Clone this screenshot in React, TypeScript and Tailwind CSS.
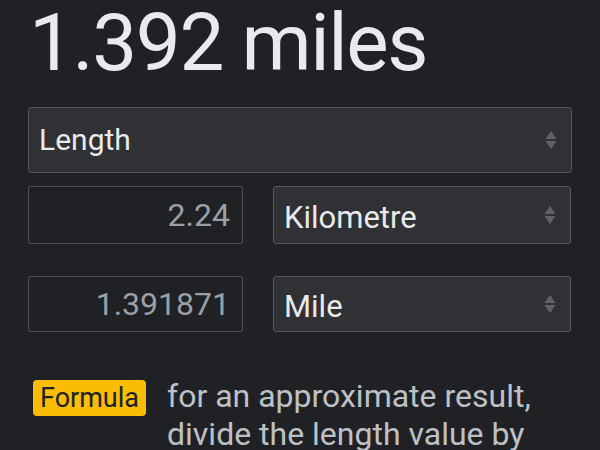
import type { ReactElement } from "react";

function SortArrows(): ReactElement {
  return (
    <svg width="12" height="20" viewBox="0 0 12 20" className="shrink-0" aria-hidden="true">
      <path d="M6 1 L11.5 9 L0.5 9 Z" fill="#5f6368" />
      <path d="M6 19 L11.5 11 L0.5 11 Z" fill="#5f6368" />
    </svg>
  );
}

function SelectBox({ label, size, height }: { label: string; size: string; height: string }): ReactElement {
  return (
    <div
      className={`flex items-center justify-between rounded-[3px] border border-[#55585c] bg-[#303134] pl-[10px] pr-[14px] text-[#e8eaed] ${height}`}
    >
      <span className={`${size} leading-none`}>{label}</span>
      <SortArrows />
    </div>
  );
}

function ValueBox({ value, height }: { value: string; height: string }): ReactElement {
  return (
    <div
      className={`flex items-center justify-end rounded-[2px] border border-[#4d5054] bg-[#202124] pr-[12px] text-[32px] leading-none text-[#9aa0a6] ${height}`}
    >
      {value}
    </div>
  );
}

export default function App(): ReactElement {
  return (
    <div className="min-h-screen w-full overflow-hidden bg-[#202124] px-[28px] font-['Roboto','Noto_Sans',sans-serif]">
      <h1 className="mt-[3px] h-[80px] pl-[1px] text-[80px] font-normal leading-none tracking-[-1.4px] text-[#e8eaed]">
        1.392 miles
      </h1>

      <div className="mt-[24px]">
        <SelectBox label="Length" size="text-[30px]" height="h-[66px]" />
      </div>

      <div className="mt-[13px] grid grid-cols-[215px_298px] gap-x-[30px]">
        <ValueBox value="2.24" height="h-[58px]" />
        <SelectBox label="Kilometre" size="text-[31px] pt-[4px]" height="h-[58px]" />
      </div>

      <div className="mt-[32px] grid grid-cols-[215px_298px] gap-x-[30px]">
        <ValueBox value="1.391871" height="h-[56px]" />
        <SelectBox label="Mile" size="text-[31px] pt-[4px]" height="h-[56px]" />
      </div>

      <div className="mt-[45px] flex items-baseline pl-[5px]">
        <span className="mr-[21px] shrink-0 rounded-[4px] bg-[#fbbc04] px-[7px] text-[27px] leading-[36px] text-[#202124]">
          Formula
        </span>
        <p className="text-[32px] leading-[38px] text-[#bdc1c6]">
          for an approximate result, divide the length value by 1.609
        </p>
      </div>
    </div>
  );
}
